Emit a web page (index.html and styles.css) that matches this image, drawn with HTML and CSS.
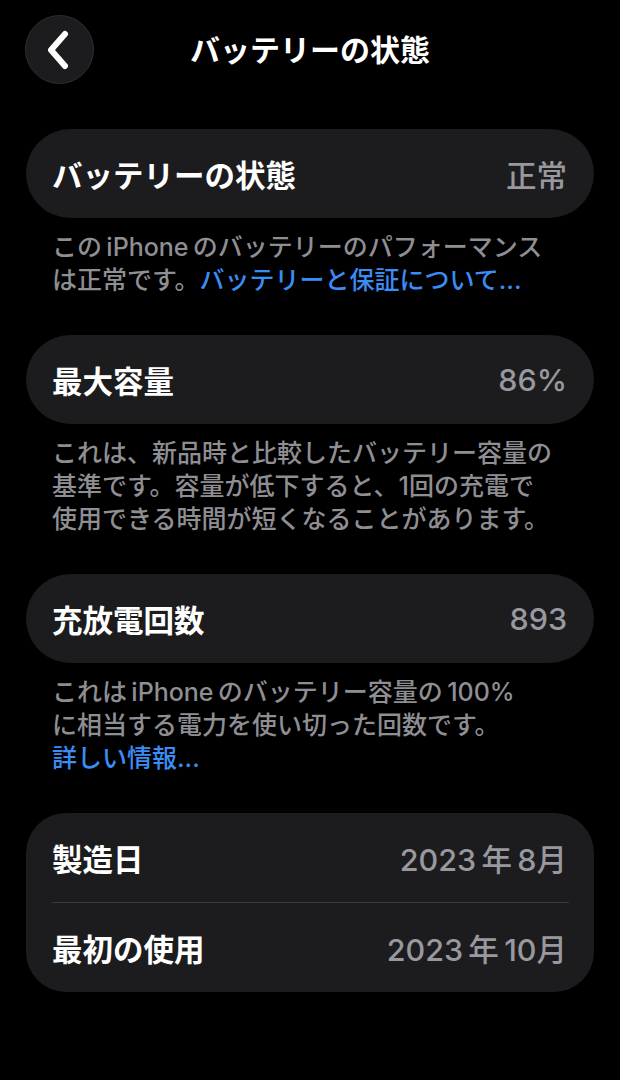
FILE: index.html
```html
<!DOCTYPE html>
<html lang="ja">
<head>
<meta charset="utf-8">
<title>バッテリーの状態</title>
<link rel="stylesheet" href="styles.css">
</head>
<body>
<header class="nav">
  <button class="back" aria-label="戻る">
    <svg width="24" height="40" viewBox="0 0 24 40"><path d="M19 4 L5 20 L19 36" fill="none" stroke="#fff" stroke-width="6" stroke-linecap="round" stroke-linejoin="round"/></svg>
  </button>
  <h1 class="title">バッテリーの状態</h1>
  <span></span>
</header>

<main>
  <section class="group">
    <div class="card">
      <div class="row"><span class="label">バッテリーの状態</span><span class="value">正常</span></div>
    </div>
    <p class="note">この&#8201;iPhone&#8201;のバッテリーのパフォーマンス<br>は正常です。<a class="link">バッテリーと保証について...</a></p>
  </section>

  <section class="group">
    <div class="card">
      <div class="row"><span class="label">最大容量</span><span class="value">86%</span></div>
    </div>
    <p class="note">これは、新品時と比較したバッテリー容量の<br>基準です。容量が低下すると、1回の充電で<br>使用できる時間が短くなることがあります。</p>
  </section>

  <section class="group">
    <div class="card">
      <div class="row"><span class="label">充放電回数</span><span class="value">893</span></div>
    </div>
    <p class="note">これは&#8201;iPhone&#8201;のバッテリー容量の&#8201;100%<br>に相当する電力を使い切った回数です。<br><a class="link">詳しい情報...</a></p>
  </section>

  <section class="group">
    <div class="card card-list">
      <div class="row"><span class="label">製造日</span><span class="value">2023&#8201;年&#8201;8月</span></div>
      <div class="sep"></div>
      <div class="row"><span class="label">最初の使用</span><span class="value">2023&#8201;年&#8201;10月</span></div>
    </div>
  </section>
</main>
</body>
</html>
```

FILE: styles.css
```css
* {
  box-sizing: border-box;
}

html,
body {
  margin: 0;
  padding: 0;
  background: #000;
}

body {
  width: 620px;
  min-height: 1080px;
  font-family: "Inter", "Noto Sans CJK JP", sans-serif;
  color: #fff;
}

/* top navigation bar */
.nav {
  display: grid;
  grid-template-columns: 69px 1fr 69px;
  align-items: center;
  padding: 15px 25px 0;
}

.back {
  width: 69px;
  height: 69px;
  border-radius: 50%;
  background: #1c1c1e;
  border: 1px solid #2e2e30;
  display: flex;
  align-items: center;
  justify-content: center;
  padding: 0 4px 0 0;
}

.title {
  margin: 0;
  text-align: center;
  font-size: 30px;
  font-weight: 700;
  line-height: 40px;
}

main {
  padding: 45px 26px 0;
}

.group {
  margin-bottom: 38px;
}

.card {
  background: #1c1c1e;
  border-radius: 45px;
}

.card-list {
  border-radius: 40px;
}

.row {
  height: 89px;
  display: flex;
  align-items: center;
  justify-content: space-between;
  padding: 0 27px 0 26px;
}

.label {
  font-size: 30.5px;
  font-weight: 600;
}

.value {
  font-size: 30.5px;
  font-weight: 500;
  color: #98989f;
}

.sep {
  height: 1px;
  background: #3a3a3c;
  margin: 0 25px 0 26px;
}

.note {
  margin: 0;
  padding: 13px 26px 0;
  font-size: 25px;
  font-weight: 500;
  line-height: 33px;
  color: #8e8e93;
}

.link {
  color: #3b8cf4;
}
```
